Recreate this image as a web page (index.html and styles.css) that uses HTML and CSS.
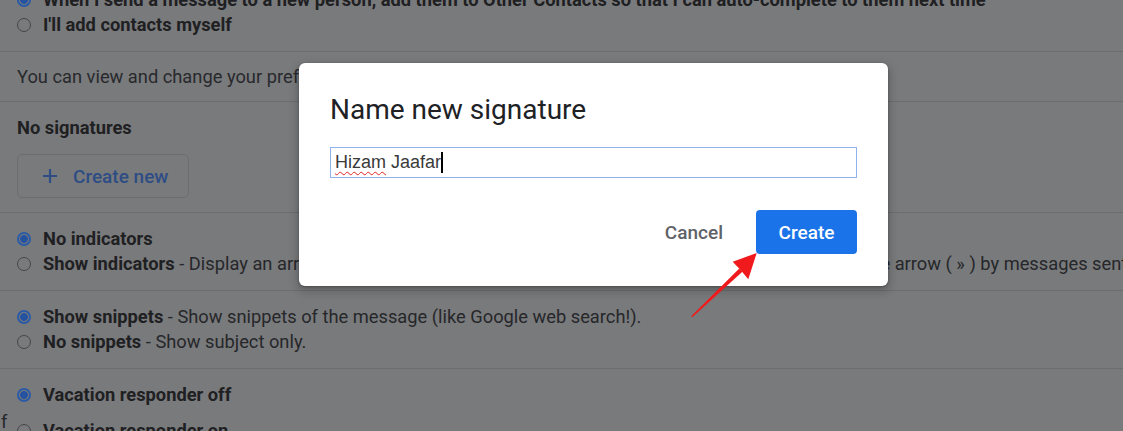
FILE: index.html
```html
<!DOCTYPE html>
<html lang="en">
<head>
<meta charset="utf-8">
<title>Settings - Name new signature</title>
<link rel="stylesheet" href="styles.css">
</head>
<body>
<main class="settings">
  <section class="group g-contacts">
    <div class="opt"><span class="radio on"></span><span class="lbl">When I send a message to a new person, add them to Other Contacts so that I can auto-complete to them next time</span></div>
    <div class="opt"><span class="radio"></span><span class="lbl">I'll add contacts myself</span></div>
  </section>
  <section class="group g-note">
    <p class="note">You can view and change your preferences for Other Contacts in Google Contacts.</p>
  </section>
  <section class="group g-sig">
    <div class="sig-title">No signatures</div>
    <button class="create-new" type="button">
      <svg class="plus" viewBox="0 0 16 16" width="16" height="16" aria-hidden="true"><path d="M8 1v14M1 8h14" stroke="currentColor" stroke-width="2.2" fill="none"/></svg>
      <span>Create new</span>
    </button>
  </section>
  <section class="group">
    <div class="opt"><span class="radio on"></span><span class="lbl">No indicators</span></div>
    <div class="opt"><span class="radio"></span><span><span class="lbl">Show indicators</span> - Display an arrow ( › ) by messages sent to my address (not a mailing list), and a double arrow ( » ) by messages sent only to me.</span></div>
  </section>
  <section class="group">
    <div class="opt"><span class="radio on"></span><span><span class="lbl">Show snippets</span> - Show snippets of the message (like Google web search!).</span></div>
    <div class="opt"><span class="radio"></span><span><span class="lbl">No snippets</span> - Show subject only.</span></div>
  </section>
  <section class="group g-vac">
    <span class="gutter">f</span>
    <div class="opt"><span class="radio on"></span><span class="lbl">Vacation responder off</span></div>
    <div class="opt"><span class="radio"></span><span class="lbl">Vacation responder on</span></div>
  </section>
</main>

<div class="dialog" role="dialog" aria-label="Name new signature">
  <h2 class="dlg-title">Name new signature</h2>
  <div class="field"><span class="typo">Hizam</span>&nbsp;Jaafar<span class="caret"></span></div>
  <div class="actions">
    <button class="btn-cancel" type="button">Cancel</button>
    <button class="btn-create" type="button">Create</button>
  </div>
</div>

<svg class="arrow" width="80" height="80" viewBox="0 0 80 80" aria-hidden="true">
  <polygon points="71.7,8 47.7,16.7 55.8,25.2 63.3,34.3" fill="#f0191b"/>
  <polygon points="6.2,71.2 54.3,23.6 57.4,26.7 7.2,72.2" fill="#f0191b"/>
</svg>
</body>
</html>
```

FILE: styles.css
```css
html, body {
  margin: 0;
  padding: 0;
}
body {
  width: 1123px;
  height: 431px;
  overflow: hidden;
  background: #797a7c;
  font-family: Roboto, "Liberation Sans", Arial, sans-serif;
  font-size: 18.3px;
  color: #26272a;
  position: relative;
}
.settings {
  margin-top: -26px;
  overflow: hidden;
}
.group {
  display: grid;
  grid-template-columns: 17px 1fr;
  padding: 13px 0 14px;
  border-bottom: 1px solid #6c6d6f;
}
.group > * {
  grid-column: 2;
}
.g-vac {
  row-gap: 11px;
}
.group > .gutter {
  grid-column: 1;
  grid-row: 1 / span 2;
  align-self: start;
  padding: 27px 0 0 1px;
  line-height: 25px;
  color: #26272a;
}
.opt {
  display: flex;
  align-items: center;
  gap: 12px;
  height: 25px;
  line-height: 25px;
  white-space: nowrap;
  overflow: hidden;
}
.lbl {
  font-weight: 700;
  color: #1f2022;
}
.radio {
  flex: none;
  width: 14px;
  height: 14px;
  box-sizing: border-box;
  border-radius: 50%;
  border: 1.5px solid #45464a;
}
.radio.on {
  border: 2px solid #2b5aa6;
  background: radial-gradient(circle, #2553a0 0 3.6px, transparent 4.2px);
}
.g-note {
  padding: 12px 0 12px;
}
.note {
  margin: 0;
  line-height: 25px;
  white-space: nowrap;
  overflow: hidden;
  color: #28292c;
}
.g-sig {
  padding: 13px 0 14px;
}
.sig-title {
  font-weight: 700;
  line-height: 25px;
  color: #1f2022;
}
.create-new {
  justify-self: start;
  margin-top: 14px;
  display: flex;
  align-items: center;
  gap: 15px;
  height: 44px;
  box-sizing: border-box;
  padding: 0 20px 0 24px;
  background: transparent;
  border: 1px solid #6c6d6f;
  border-radius: 5px;
  font-family: Roboto, "Liberation Sans", sans-serif;
  font-size: 19px;
  font-weight: 500;
  color: #2e4d84;
}
.plus {
  display: block;
}

/* dialog */
.dialog {
  position: absolute;
  left: 299px;
  top: 63px;
  width: 589px;
  box-sizing: border-box;
  padding: 29px 31px 32px;
  background: #fff;
  border-radius: 6px;
  box-shadow: 0 1px 3px rgba(0,0,0,.3), 0 4px 8px 3px rgba(0,0,0,.15);
}
.dlg-title {
  margin: 0 0 19px;
  font-family: Roboto, "Open Sans", sans-serif;
  font-weight: 400;
  font-size: 28px;
  line-height: 36px;
  color: #202124;
}
.field {
  display: flex;
  align-items: center;
  height: 31px;
  box-sizing: border-box;
  padding-left: 4px;
  border: 1px solid #8fb3ea;
  font-family: "Liberation Sans", Arial, sans-serif;
  font-size: 18px;
  color: #3a3a3a;
  white-space: pre;
}
.typo {
  text-decoration: underline wavy #e0241e;
  text-decoration-thickness: 1px;
  text-underline-offset: 3px;
}
.caret {
  display: inline-block;
  width: 2px;
  height: 21px;
  background: #000;
}
.actions {
  display: flex;
  justify-content: flex-end;
  gap: 9px;
  margin-top: 32px;
}
.btn-cancel,
.btn-create {
  height: 44px;
  border: none;
  font-family: Roboto, "Liberation Sans", sans-serif;
  font-size: 19px;
  font-weight: 500;
  border-radius: 4px;
}
.btn-cancel {
  padding: 0 24px;
  background: transparent;
  color: #5f6368;
}
.btn-create {
  width: 101px;
  background: #1a73e8;
  color: #fff;
}
.arrow {
  position: absolute;
  left: 685px;
  top: 245px;
}
```
